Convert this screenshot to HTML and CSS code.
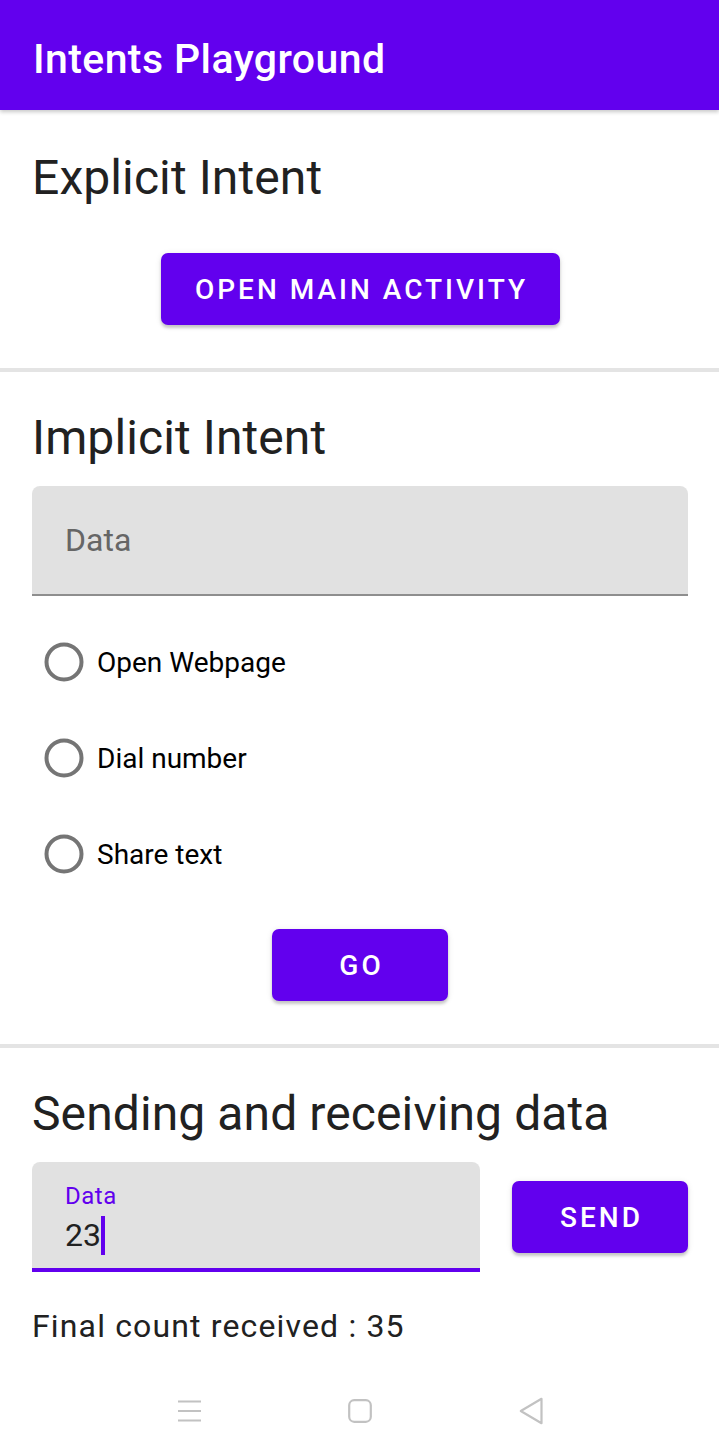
FILE: index.html
```html
<!DOCTYPE html>
<html lang="en">
<head>
<meta charset="utf-8">
<title>Intents Playground</title>
<link rel="stylesheet" href="styles.css">
</head>
<body>
<div class="screen">
  <header class="appbar">
    <h1 class="appbar-title">Intents Playground</h1>
  </header>

  <main class="content">
    <section class="section section-explicit">
      <h2 class="heading">Explicit Intent</h2>
      <div class="center">
        <button class="btn btn-open" type="button">Open Main Activity</button>
      </div>
    </section>

    <hr class="divider">

    <section class="section section-implicit">
      <h2 class="heading">Implicit Intent</h2>
      <div class="field field-empty">
        <span class="hint">Data</span>
      </div>
      <div class="radios">
        <label class="radio">
          <svg class="radio-icon" width="48" height="48" viewBox="0 0 48 48"><circle cx="24" cy="24" r="17.5" fill="none" stroke="#757575" stroke-width="4"/></svg>
          <span class="radio-label">Open Webpage</span>
        </label>
        <label class="radio">
          <svg class="radio-icon" width="48" height="48" viewBox="0 0 48 48"><circle cx="24" cy="24" r="17.5" fill="none" stroke="#757575" stroke-width="4"/></svg>
          <span class="radio-label">Dial number</span>
        </label>
        <label class="radio">
          <svg class="radio-icon" width="48" height="48" viewBox="0 0 48 48"><circle cx="24" cy="24" r="17.5" fill="none" stroke="#757575" stroke-width="4"/></svg>
          <span class="radio-label">Share text</span>
        </label>
      </div>
      <div class="center">
        <button class="btn btn-small" type="button">Go</button>
      </div>
    </section>

    <hr class="divider">

    <section class="section section-send">
      <h2 class="heading">Sending and receiving data</h2>
      <div class="send-row">
        <div class="field field-focused">
          <span class="float-label">Data</span>
          <span class="value">23<span class="cursor"></span></span>
        </div>
        <button class="btn btn-small" type="button">Send</button>
      </div>
      <p class="count">Final count received : 35</p>
    </section>
  </main>

  <nav class="navbar">
    <svg class="nav-icon" width="24" height="24" viewBox="0 0 24 24"><path d="M1 2.5h23M1 12h23M1 21.5h23" stroke="#c2c2c2" stroke-width="2.2" fill="none"/></svg>
    <svg class="nav-icon" width="24" height="24" viewBox="0 0 24 24"><rect x="1.2" y="1.2" width="21.6" height="21.6" rx="5" fill="none" stroke="#c2c2c2" stroke-width="2.2"/></svg>
    <svg class="nav-icon" width="24" height="28" viewBox="0 0 24 28"><path d="M22.5 1.8v24.4L1.8 14z" fill="none" stroke="#c2c2c2" stroke-width="2.2" stroke-linejoin="round"/></svg>
  </nav>
</div>
</body>
</html>
```

FILE: styles.css
```css
* { box-sizing: border-box; }

html, body {
  margin: 0;
  padding: 0;
  background: #ffffff;
}

body {
  font-family: Roboto, "Noto Sans", "Liberation Sans", sans-serif;
  color: rgba(0, 0, 0, 0.87);
}

.screen {
  width: 719px;
  min-height: 1455px;
  display: flex;
  flex-direction: column;
}

.appbar {
  height: 110px;
  background: #6200ee;
  display: flex;
  align-items: center;
  padding: 0 33px;
  box-shadow: 0 2px 4px rgba(0, 0, 0, 0.22);
  position: relative;
  z-index: 1;
}

.appbar-title {
  margin: 0;
  color: #ffffff;
  font-size: 41px;
  font-weight: 500;
  line-height: 48px;
  letter-spacing: 0.4px;
  padding-top: 8px;
}

.content {
  flex: 1;
  display: flex;
  flex-direction: column;
}

.section {
  padding: 0 31px 0 32px;
  display: flex;
  flex-direction: column;
}

.section-explicit { padding-top: 40px; padding-bottom: 43px; }
.section-implicit { padding-top: 38px; padding-bottom: 43px; }
.section-send { padding-top: 38px; }

.heading {
  margin: 0;
  font-size: 48px;
  font-weight: 400;
  line-height: 56px;
  color: #212121;
  letter-spacing: 0.1px;
}

.center {
  display: flex;
  justify-content: center;
}

.section-explicit .center { margin-top: 47px; }

.btn {
  font-family: Roboto, "Noto Sans", "Liberation Sans", sans-serif;
  background: #6200ee;
  color: #ffffff;
  border: none;
  border-radius: 7px;
  height: 72px;
  font-size: 28px;
  font-weight: 500;
  letter-spacing: 3px;
  text-transform: uppercase;
  box-shadow: 0 3px 3px rgba(0, 0, 0, 0.18), 0 1px 6px rgba(0, 0, 0, 0.1);
  padding: 0 20px 0 23px;
  display: flex;
  align-items: center;
  justify-content: center;
}

.btn-open { width: 399px; }
.btn-small { width: 176px; flex: none; }

.divider {
  margin: 0;
  border: none;
  height: 4px;
  background: #e4e4e4;
}

.field {
  background: #e1e1e1;
  border-radius: 8px 8px 0 0;
  padding-left: 33px;
}

.field-empty {
  margin-top: 20px;
  height: 110px;
  border-bottom: 2px solid #8e8e8e;
  display: flex;
  align-items: center;
}

.hint {
  font-size: 32px;
  line-height: 40px;
  color: #666666;
}

.radios {
  margin-top: 18px;
  display: flex;
  flex-direction: column;
}

.radio {
  height: 96px;
  display: flex;
  align-items: center;
}

.radio-icon {
  margin-left: 8px;
  flex: none;
}

.radio-label {
  margin-left: 9px;
  font-size: 28px;
  color: #000000;
  letter-spacing: 0;
}

.section-implicit .center { margin-top: 27px; }

.send-row {
  margin-top: 20px;
  display: flex;
  align-items: center;
  gap: 32px;
}

.field-focused {
  width: 448px;
  height: 110px;
  flex: none;
  padding-top: 20px;
  border-bottom: 4px solid #6200ee;
  display: flex;
  flex-direction: column;
  gap: 5px;
}

.float-label {
  font-size: 24px;
  line-height: 28px;
  color: #6200ee;
  letter-spacing: 0.5px;
}

.value {
  font-size: 32px;
  line-height: 40px;
  color: #212121;
  display: flex;
  align-items: center;
}

.cursor {
  display: inline-block;
  width: 4px;
  height: 39px;
  background: #6200ee;
  margin-left: 0;
}

.count {
  margin: 35px 0 0;
  font-size: 32px;
  line-height: 38px;
  color: #212121;
  letter-spacing: 1.15px;
}

.navbar {
  height: 80px;
  padding-bottom: 8px;
  display: flex;
  align-items: center;
  justify-content: center;
  gap: 147px;
}

.nav-icon { display: block; }
```
